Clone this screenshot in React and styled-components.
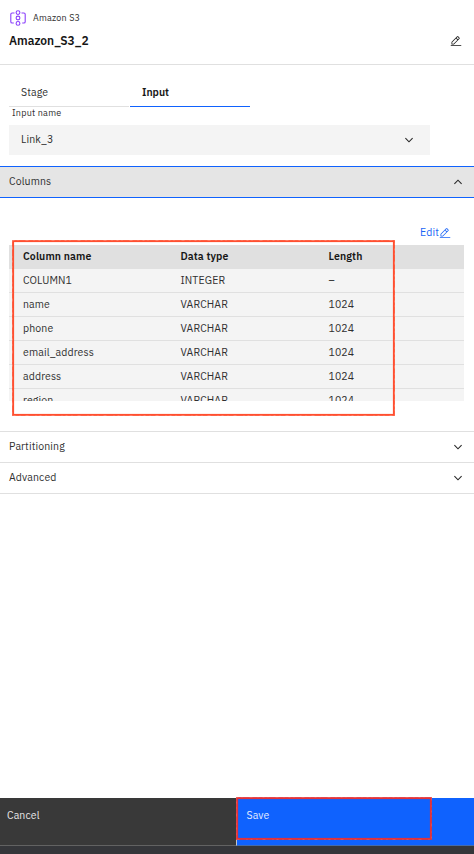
import React from "react";
import styled, { createGlobalStyle } from "styled-components";

const Global = createGlobalStyle`
  * { box-sizing: border-box; }
  body { margin: 0; background: #fff; }
`;

const Panel = styled.main`
  position: relative;
  display: flex;
  flex-direction: column;
  width: 474px;
  height: 854px;
  overflow: hidden;
  background: #fff;
  color: #303030;
  font-family: "IBM Plex Sans", Roboto, sans-serif;
  font-size: 10.5px;
  line-height: 14px;
`;

const Text = styled.span`
  display: block;
  white-space: nowrap;
  letter-spacing: ${(p) => p.$track ?? 0.12}px;
  font-size: ${(p) => p.$size || 10.5}px;
  font-weight: ${(p) => (p.$bold ? 600 : 400)};
  padding-bottom: ${(p) => (p.$size ? 0 : 2)}px;
`;

const Header = styled.header`
  height: 65px;
  padding: 10px 12px 0 9px;
  border-bottom: 1px solid #e0e0e0;
`;
const Service = styled.div`
  display: flex;
  align-items: center;
  gap: 7px;
  height: 16px;
  padding-left: 1px;
`;
const TitleRow = styled.div`
  display: flex;
  align-items: center;
  justify-content: space-between;
  height: 29px;
  color: #161616;
`;

const Tabs = styled.nav`
  display: flex;
  gap: 1px;
  height: 42px;
  padding: 14px 0 0 9px;
`;
const Tab = styled.button`
  width: 120px;
  height: 28px;
  padding: 0 0 0 12px;
  border: 0;
  border-bottom: 1px solid ${(p) => (p.$active ? "#0f62fe" : "#e0e0e0")};
  background: transparent;
  color: ${(p) => (p.$active ? "#161616" : "#303030")};
  font: inherit;
  text-align: left;
`;
const FieldLabel = styled.label`
  display: block;
  height: 18px;
  padding-left: 12px;
  line-height: 12px;
`;
const Select = styled.div`
  display: flex;
  align-items: center;
  justify-content: space-between;
  width: 421px;
  height: 30px;
  margin: 0 0 11px 9px;
  padding: 0 16px 0 12px;
  background: #f4f4f4;
`;

const SectionHead = styled.div`
  display: flex;
  align-items: center;
  justify-content: space-between;
  height: ${(p) => (p.$open ? 32 : 31)}px;
  padding: 0 11px 0 9px;
  border-bottom: 1px solid ${(p) => (p.$open ? "#0f62fe" : "#e0e0e0")};
  border-top: ${(p) => (p.$open ? "1px solid #0f62fe" : "0")};
  background: ${(p) => (p.$open ? "#e5e5e5" : "#fff")};
`;
const SectionBody = styled.div`
  height: 234px;
  padding: 28px 10px 0 9px;
  border-bottom: 1px solid #e0e0e0;
`;
const EditLink = styled.a`
  display: flex;
  align-items: center;
  justify-content: flex-end;
  height: 14px;
  margin-bottom: 5px;
  padding-right: 13px;
  color: #1b64f6;
`;
const Table = styled.div`
  height: 156px;
  overflow: hidden;
  background: #f4f4f4;
`;
const Row = styled.div`
  display: grid;
  grid-template-columns: 157.5px 148px 1fr;
  align-items: center;
  height: 24px;
  padding: 0 0 0 14px;
  border-bottom: 1px solid #e0e0e0;
  background: ${(p) => (p.$head ? "#e0e0e0" : "#f4f4f4")};
  color: ${(p) => (p.$head ? "#161616" : "#303030")};
`;

const Footer = styled.footer`
  display: grid;
  grid-template-columns: 236px 1fr;
  height: 56px;
  margin-top: auto;
  background: #35363a;
  border-bottom: 8px solid #35363a;
`;
const Action = styled.button`
  display: flex;
  align-items: flex-start;
  height: 48px;
  padding: 10px 0 0 ${(p) => (p.$primary ? 9.5 : 7)}px;
  border: 0;
  border-bottom: 1px solid ${(p) => (p.$primary ? "#456ba9" : "#626262")};
  border-left: ${(p) => (p.$primary ? "1px solid #c6c6c6" : "0")};
  background: ${(p) => (p.$primary ? "#0f62fe" : "#393939")};
  color: ${(p) => (p.$primary ? "#e4ecff" : "#e8e8e8")};
  font: inherit;
`;

const Outline = styled.svg`
  position: absolute;
  left: ${(p) => p.$x}px;
  top: ${(p) => p.$y}px;
  pointer-events: none;
`;

const Chevron = ({ up }) => (
  <svg width="10" height="10" viewBox="0 0 10 10" fill="none" stroke="#262626" strokeWidth="1.1">
    <path d={up ? "M1.4 6.8 5 3.2 8.6 6.8" : "M1.4 3.2 5 6.8 8.6 3.2"} />
  </svg>
);

const Pencil = () => (
  <svg width="12" height="12" viewBox="0 0 32 32" fill="currentColor">
    <path d="M2 27h28v2.600H2zM25.400 10c.8-.8.8-2 0-2.800l-3.600-3.600c-.8-.8-2-.8-2.800 0l-15 15V25h6.400zM20.400 5 24 8.600l-3 3L17.400 8zM6 23v-3.600l10-10 3.600 3.600-10 10z" />
  </svg>
);

const StorageLogo = () => (
  <svg width="16" height="16" viewBox="0 0 16 16" fill="none" stroke="#8a3ffc" strokeWidth="1.1">
    <path d="M4.500 3H2.100Q.8 3 .8 4.300v7.400Q.8 13 2.100 13H3.800M11.500 3h2.400q1.300 0 1.300 1.300v7.400q0 1.300-1.300 1.300h-1.700" />
    <circle cx="8" cy="2.600" r="1.900" />
    <circle cx="8" cy="8" r="1.900" />
    <circle cx="8" cy="13.400" r="1.900" />
  </svg>
);

const Marker = ({ x, y, w, h, color, grain }) => (
  <Outline $x={x} $y={y} width={w} height={h} fill="none">
    <rect x="1.1" y="1.1" width={w - 2.2} height={h - 2.2} stroke={color} strokeWidth="2" />
    <rect x="0.5" y="0.5" width={w - 1} height={h - 1} stroke={grain} strokeWidth=".6" strokeDasharray="2 3 1 7 3 5 1 4" opacity=".45" />
  </Outline>
);

const rows = [
  ["COLUMN1", "INTEGER", "–"],
  ["name", "VARCHAR", "1024"],
  ["phone", "VARCHAR", "1024"],
  ["email_address", "VARCHAR", "1024"],
  ["address", "VARCHAR", "1024"],
  ["region", "VARCHAR", "1024"],
];

export default function App() {
  return (
    <>
      <Global />
      <Panel>
        <Header>
          <Service>
            <StorageLogo />
            <Text $size={9} $track={0.2}>Amazon S3</Text>
          </Service>
          <TitleRow>
            <Text $bold $size={12} $track={0}>Amazon_S3_2</Text>
            <Pencil />
          </TitleRow>
        </Header>
        <Tabs>
          <Tab><Text>Stage</Text></Tab>
          <Tab $active><Text $bold $track={0}>Input</Text></Tab>
        </Tabs>
        <FieldLabel><Text $size={9} $track={0.24}>Input name</Text></FieldLabel>
        <Select><Text>Link_3</Text><Chevron /></Select>
        <SectionHead $open><Text>Columns</Text><Chevron up /></SectionHead>
        <SectionBody>
          <EditLink><Text>Edit</Text><Pencil /></EditLink>
          <Table>
            <Row $head>
              <Text $bold>Column name</Text>
              <Text $bold>Data type</Text>
              <Text $bold>Length</Text>
            </Row>
            {rows.map(([name, type, length]) => (
              <Row key={name}>
                <Text>{name}</Text>
                <Text>{type}</Text>
                <Text>{length}</Text>
              </Row>
            ))}
          </Table>
        </SectionBody>
        <SectionHead><Text>Partitioning</Text><Chevron /></SectionHead>
        <SectionHead><Text>Advanced</Text><Chevron /></SectionHead>
        <Footer>
          <Action><Text>Cancel</Text></Action>
          <Action $primary><Text>Save</Text></Action>
        </Footer>
        <Marker x={12} y={240} w={383} h={176} color="#ff4f30" grain="#ffc4b8" />
        <Marker x={236} y={797} w={196} h={43} color="#e2323a" grain="#ff8a72" />
      </Panel>
    </>
  );
}
